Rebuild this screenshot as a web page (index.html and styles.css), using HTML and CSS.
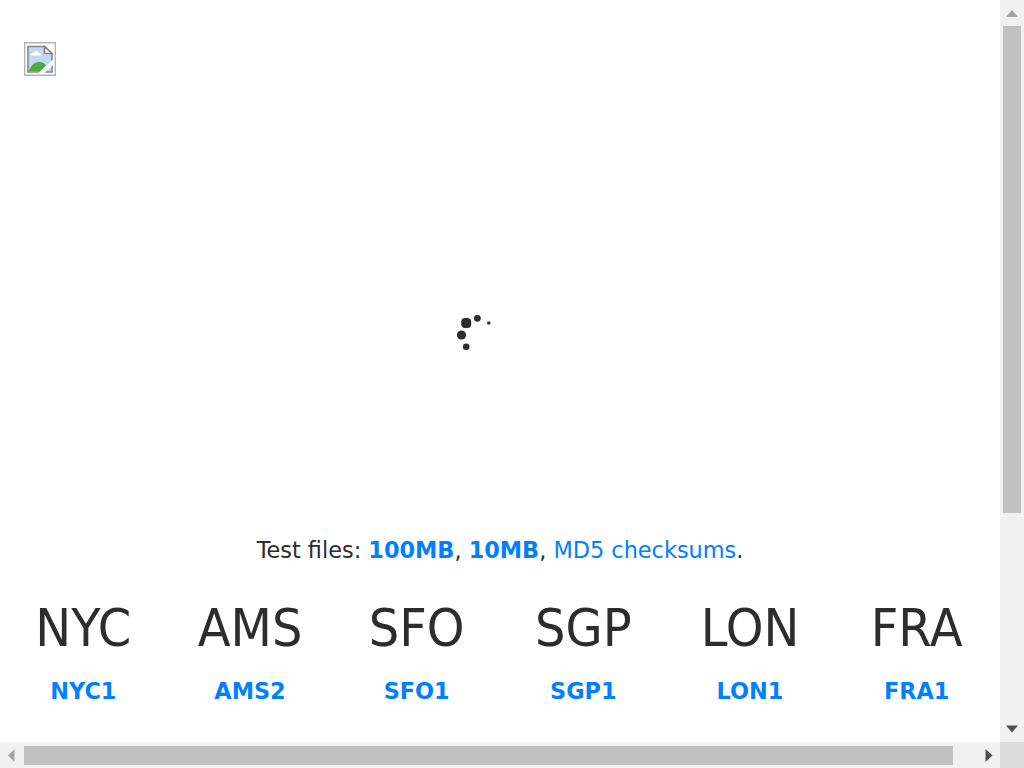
FILE: index.html
```html
<!DOCTYPE html>
<html lang="en">
<head>
<meta charset="utf-8">
<title>Speed test</title>
<link rel="stylesheet" href="styles.css">
</head>
<body>
<div class="window">
<main class="page">
  <svg class="logo" width="32" height="34" viewBox="0 0 32 34">
    <path d="M.7.7h30.6v32.6H.7z" fill="#fff" stroke="#b5b5b5" stroke-width="1.4"/>
    <path d="M4 4.500h17l7 7V30H4z" fill="#c4d7f5" stroke="#888" stroke-width="1.6"/>
    <path d="M6.500 13.500c0-3 3-2.500 4-3.500 2-2.500 4-.5 4 1 2.500 0 2.500 1.500 2.500 2.500z" fill="#fff"/>
    <path d="M5 29c2-6 6-9 10-9 4 0 6 2 7 4l-6 5.200z" fill="#4eaa3b"/>
    <path d="M14.500 31L29 17.500v5.500L20.500 31z" fill="#fff"/>
    <path d="M20.500 4.500v7H28z" fill="#f4f4f4" stroke="#888" stroke-width="1.6"/>
  </svg>
  <div class="stage">
    <svg class="spinner" width="36" height="38" viewBox="456 313 36 38" fill="#2d2d2d">
      <rect x="461.2" y="318.100" width="10" height="10" rx="4"/>
      <circle cx="477.4" cy="318.3" r="3.4"/>
      <rect x="487.2" y="321.4" width="3.2" height="3.2" rx=".6"/>
      <circle cx="461.5" cy="335" r="4.6"/>
      <circle cx="466.2" cy="346.8" r="3.3"/>
    </svg>
  </div>
  <p class="files">Test files: <a href="#"><b>100MB</b></a>, <a href="#"><b>10MB</b></a>, <a href="#">MD5 checksums</a>.</p>
  <div class="regions">
    <section class="region"><h2>NYC</h2><a href="#">NYC1</a></section>
    <section class="region"><h2>AMS</h2><a href="#">AMS2</a></section>
    <section class="region"><h2>SFO</h2><a href="#">SFO1</a></section>
    <section class="region"><h2>SGP</h2><a href="#">SGP1</a></section>
    <section class="region"><h2>LON</h2><a href="#">LON1</a></section>
    <section class="region"><h2>FRA</h2><a href="#">FRA1</a></section>
  </div>
</main>
<div class="vbar">
  <svg width="24" height="26"><path d="M6 17l6-7 6 7z" fill="#a3a3a3"/></svg>
  <div class="vthumb"></div>
  <svg class="down" width="24" height="26"><path d="M6 9.500h12l-6 7z" fill="#505050"/></svg>
</div>
<div class="hbar">
  <svg width="24" height="26"><path d="M14.500 7v13L8 13.500z" fill="#a3a3a3"/></svg>
  <div class="hthumb"></div>
  <svg class="right" width="24" height="26"><path d="M9.500 7v13l7-6.500z" fill="#505050"/></svg>
</div>
<div class="corner"></div>
</div>
</body>
</html>
```
FILE: styles.css
```css
* { box-sizing: border-box; }
body { margin: 0; overflow: hidden; background: #fff; color: #2d2d2d; font-family: "DejaVu Sans", sans-serif; }
a { color: #0080ff; text-decoration: none; }
.window { display: grid; grid-template-columns: 1000px 24px; grid-template-rows: 742px 26px; width: 1024px; height: 768px; }
.page { padding-top: 42px; overflow: hidden; }
.logo { display: block; margin-left: 24px; }
.stage { height: 458px; padding: 237px 0 0 456px; }
.spinner { display: block; }
.files { margin: 0; height: 32px; line-height: 32px; font-size: 22.4px; text-align: center; white-space: nowrap; }
.regions { display: grid; grid-template-columns: repeat(6, 1fr); margin-top: 32px; text-align: center; }
.region h2 { margin: 0; font-size: 48px; font-weight: 400; line-height: 60px; transform: scaleY(1.065); }
.region a { display: block; margin-top: 17px; font-size: 22.4px; font-weight: 700; line-height: 32px; }
.vbar { display: flex; flex-direction: column; background: #f1f1f1; }
.vbar svg, .hbar svg { display: block; flex: none; }
.vthumb { width: 18px; height: 487px; margin-left: 3px; background: #c1c1c1; }
.down { margin-top: auto; }
.hbar { display: flex; background: #f1f1f1; }
.hthumb { width: 929px; height: 19px; margin-top: 4px; background: #c1c1c1; }
.right { margin-left: auto; }
.corner { background: #dcdcdc; }
```
